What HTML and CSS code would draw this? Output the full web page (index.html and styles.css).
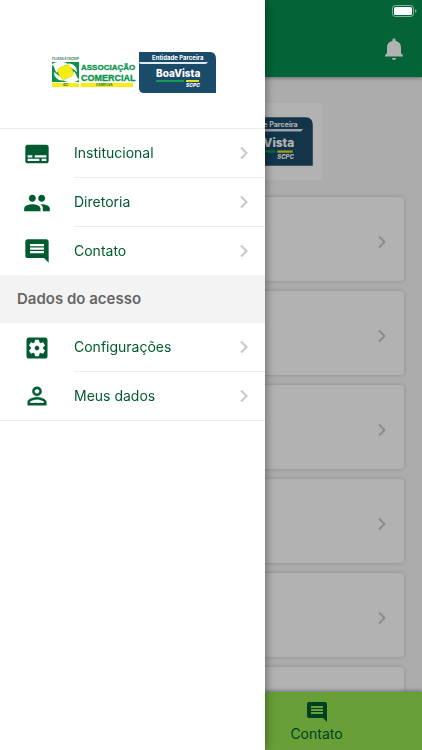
FILE: index.html
```html
<!DOCTYPE html>
<html lang="pt-BR">
<head>
<meta charset="utf-8">
<meta name="viewport" content="width=device-width, initial-scale=1">
<title>Associação Comercial</title>
<link rel="stylesheet" href="styles.css">
</head>
<body>
<svg class="sprite" aria-hidden="true">
  <symbol id="logo" viewBox="0 0 187 65">
    <rect width="187" height="65" fill="#fff"/>
    <text class="logo-tiny" x="15" y="20" fill="#3b7a52">FILIADA À FACESP</text>
    <rect x="15" y="22" width="27" height="20" fill="#079447"/>
    <path d="M15 24C20 21 27 21 31 24L22 28L20 33C17 30 18 26 15 25ZM42 40C37 43 30 43 26 40L35 36L37 31C40 34 39 38 42 39ZM29 24C35 22 40 26 40 32L36 29ZM28 40C22 42 17 38 17 32L21 35Z" fill="#fff"/>
    <ellipse cx="28.500" cy="32" rx="7.500" ry="6.500" fill="#f7ec13"/>
    <path d="M20 29L32 24L37 35L25 40Z" fill="#f7ec13"/>
    <rect x="15" y="43" width="27" height="4" fill="#f7ec13"/>
    <rect x="44" y="43" width="52" height="4" fill="#f7ec13"/>
    <text class="logo-tiny" x="26" y="46" fill="#17733b">ACI</text>
    <text class="logo-tiny" x="59" y="46" fill="#17733b">CABREÚVA</text>
    <text class="logo-name" x="44" y="30" fill="#079447">ASSOCIAÇÃO</text>
    <text class="logo-name logo-name-large" x="44" y="41" fill="#079447">COMERCIAL</text>
    <path d="M102 12H173Q179 12 179 19V53H107Q102 53 102 48Z" fill="#1a4c6a"/>
    <path d="M102 22H171L169 24H105Q102 24 102 22Z" fill="#dfe9f0"/>
    <text class="logo-partner" x="115" y="20" fill="#fff">Entidade Parceira</text>
    <text class="logo-brand" x="119" y="37" fill="#fff">BoaVista</text>
    <rect x="119" y="40" width="28" height="2" fill="#169b54"/>
    <rect x="149" y="40" width="13" height="2" fill="#e3df2c"/>
    <text class="logo-scpc" x="149" y="47" fill="#fff">SCPC</text>
  </symbol>
  <symbol id="chevron" viewBox="0 0 10 14"><path d="M2 1.500L7.500 7L2 12.500" fill="none" stroke="currentColor" stroke-width="2"/></symbol>
  <symbol id="comment" viewBox="0 0 24 24"><path d="M21.990 4c0-1.100-.89-2-1.990-2H4c-1.100 0-2 .9-2 2v12c0 1.100.9 2 2 2h14l4 4-.01-18zM18 14H6v-2h12v2zm0-3H6V9h12v2zm0-3H6V6h12v2z"/></symbol>
</svg>

<div class="app">
  <header class="toolbar">
    <button class="icon-button" type="button" aria-label="Notificações">
      <svg viewBox="0 0 18 22" width="18" height="22"><path d="M9 22a2 2 0 0 0 2-2H7a2 2 0 0 0 2 2ZM16 15V9.500C16 6 14 3.600 10.500 2.800V1.700a1.500 1.500 0 0 0-3 0V2.800C4 3.600 2 6 2 9.500V15L0 17.500V18.500H18V17.500Z"/></svg>
    </button>
  </header>
  <main class="content">
    <svg class="page-logo" role="img" aria-label="Associação Comercial"><use href="#logo"/></svg>
    <div class="cards">
      <a class="card" href="#"><svg class="chevron"><use href="#chevron"/></svg></a>
      <a class="card" href="#"><svg class="chevron"><use href="#chevron"/></svg></a>
      <a class="card" href="#"><svg class="chevron"><use href="#chevron"/></svg></a>
      <a class="card" href="#"><svg class="chevron"><use href="#chevron"/></svg></a>
      <a class="card" href="#"><svg class="chevron"><use href="#chevron"/></svg></a>
      <a class="card" href="#"><svg class="chevron"><use href="#chevron"/></svg></a>
    </div>
  </main>
  <nav class="tabs">
    <a class="tab" href="#"><svg class="tab-icon"><use href="#comment"/></svg>Contato</a>
  </nav>
</div>

<div class="backdrop"></div>

<svg class="battery" viewBox="0 0 25 12" width="25" height="12" aria-hidden="true">
  <rect x=".5" y=".5" width="21" height="11" rx="3" fill="none" stroke="#fff" stroke-opacity=".5"/>
  <rect x="2" y="2" width="18" height="8" rx="1.500" fill="#fff"/>
  <path d="M23 4.200Q24.500 4.800 24.500 6T23 7.800Z" fill="#fff" fill-opacity=".5"/>
</svg>

<aside class="drawer">
  <div class="drawer-head">
    <svg class="drawer-logo" role="img" aria-label="Associação Comercial"><use href="#logo"/></svg>
  </div>
  <nav class="menu">
    <a class="item" href="#">
      <svg class="item-icon" viewBox="0 0 24 24"><path d="M20 4H4c-1.100 0-2 .9-2 2v12c0 1.100.9 2 2 2h16c1.100 0 2-.9 2-2V6c0-1.100-.9-2-2-2zM4 13h4v2H4v-2zm10 5H4v-2h10v2zm6 0h-4v-2h4v2zm0-3H10v-2h10v2z"/></svg>
      <span class="item-body">Institucional<svg class="chevron"><use href="#chevron"/></svg></span>
    </a>
    <a class="item" href="#">
      <svg class="item-icon" viewBox="0 0 24 24"><path d="M16 11c1.660 0 2.990-1.340 2.990-3S17.660 5 16 5c-1.660 0-3 1.340-3 3s1.340 3 3 3zm-8 0c1.660 0 2.990-1.340 2.990-3S9.660 5 8 5C6.340 5 5 6.340 5 8s1.340 3 3 3zm0 2c-2.330 0-7 1.170-7 3.500V19h14v-2.500c0-2.330-4.670-3.500-7-3.500zm8 0c-.29 0-.62.020-.97.050 1.160.84 1.970 1.970 1.970 3.450V19h6v-2.500c0-2.330-4.670-3.500-7-3.500z"/></svg>
      <span class="item-body">Diretoria<svg class="chevron"><use href="#chevron"/></svg></span>
    </a>
    <a class="item" href="#">
      <svg class="item-icon"><use href="#comment"/></svg>
      <span class="item-body item-body-plain">Contato<svg class="chevron"><use href="#chevron"/></svg></span>
    </a>
    <h2 class="section">Dados do acesso</h2>
    <a class="item" href="#">
      <svg class="item-icon" viewBox="0 0 24 24"><path d="M12 10c-1.100 0-2 .9-2 2s.9 2 2 2 2-.9 2-2-.9-2-2-2zm7-7H5c-1.110 0-2 .9-2 2v14c0 1.100.89 2 2 2h14c1.110 0 2-.9 2-2V5c0-1.100-.89-2-2-2zm-1.750 9c0 .23-.02.460-.05.680l1.480 1.160c.13.110.17.300.08.450l-1.400 2.420c-.09.150-.27.210-.43.150l-1.740-.7c-.36.280-.76.510-1.180.69l-.26 1.850c-.03.170-.18.300-.35.300h-2.800c-.17 0-.32-.13-.35-.29l-.26-1.850c-.43-.18-.82-.41-1.180-.69l-1.740.7c-.16.060-.34 0-.43-.15l-1.400-2.420c-.09-.15-.05-.34.080-.45l1.480-1.160c-.03-.23-.05-.46-.05-.69 0-.23.020-.46.050-.68l-1.480-1.160c-.13-.11-.17-.30-.08-.45l1.400-2.420c.09-.15.270-.21.430-.15l1.740.7c.36-.28.760-.51 1.180-.69l.26-1.850c.03-.17.180-.30.350-.30h2.800c.17 0 .32.130.35.290l.26 1.850c.43.180.82.410 1.180.69l1.740-.7c.16-.06.340 0 .43.150l1.400 2.420c.09.150.05.340-.08.450l-1.480 1.160c.03.230.05.460.05.690z"/></svg>
      <span class="item-body">Configurações<svg class="chevron"><use href="#chevron"/></svg></span>
    </a>
    <a class="item item-last" href="#">
      <svg class="item-icon" viewBox="0 0 24 24"><path d="M12 5.900c1.160 0 2.100.94 2.100 2.100s-.94 2.100-2.100 2.100S9.900 9.160 9.900 8s.94-2.100 2.100-2.100m0 9c2.970 0 6.100 1.460 6.100 2.100v1.100H5.900V17c0-.64 3.130-2.100 6.100-2.100M12 4C9.790 4 8 5.790 8 8s1.790 4 4 4 4-1.790 4-4-1.790-4-4-4zm0 9c-2.670 0-8 1.340-8 4v3h16v-3c0-2.660-5.330-4-8-4z" stroke="currentColor" stroke-width=".3"/></svg>
      <span class="item-body item-body-plain">Meus dados<svg class="chevron"><use href="#chevron"/></svg></span>
    </a>
  </nav>
</aside>
</body>
</html>
```
FILE: styles.css
```css
* { box-sizing: border-box; }

body {
  margin: 0;
  font-family: Inter, "Liberation Sans", sans-serif;
  font-size: 14px;
  line-height: 20px;
  color: #005c30;
}

a { color: inherit; text-decoration: none; }
svg { display: block; fill: currentColor; }
.sprite { display: none; }

.logo-tiny { font: 700 3px Inter, sans-serif; }
.logo-name { font: 700 8px "Liberation Sans", sans-serif; stroke: #079447; stroke-width: 0.3px; }
.logo-name-large { font-size: 9px; }
.logo-partner { font: 700 6px Inter, sans-serif; }
.logo-brand { font: 800 10px Inter, sans-serif; }
.logo-scpc { font: italic 800 5px Inter, sans-serif; }

.app {
  display: flex;
  flex-direction: column;
  height: 100vh;
  overflow: hidden;
  background: #f7f7f7;
}

.toolbar {
  display: flex;
  flex: none;
  align-items: center;
  justify-content: flex-end;
  height: 77px;
  padding: 20px 19px 0;
  background: #069050;
  box-shadow: 0 1px 4px rgba(0, 0, 0, 0.4);
  z-index: 1;
}

.icon-button {
  padding: 0;
  border: 0;
  background: none;
  color: #fff;
}

.content {
  flex: 1;
  min-height: 0;
  padding: 26px 18px 0;
  overflow: hidden;
}

.page-logo { width: 223px; height: 77px; margin: 0 auto 17px; }

.cards { display: grid; gap: 10px; }

.card {
  display: flex;
  align-items: center;
  justify-content: flex-end;
  height: 84px;
  padding: 6px 17px 0;
  border-radius: 4px;
  background: #fff;
  box-shadow: 0 0 4px rgba(0, 0, 0, 0.2);
}

.chevron { flex: none; width: 10px; height: 14px; color: #c7c7cc; }

.tabs {
  display: grid;
  flex: none;
  grid-template-columns: 1fr 1fr;
  height: 58px;
  background: #95e450;
  box-shadow: 0 -1px 4px rgba(0, 0, 0, 0.4);
  z-index: 1;
}

.tab {
  display: flex;
  grid-column: 2;
  flex-direction: column;
  align-items: center;
  padding-top: 8px;
}

.tab-icon { width: 24px; height: 24px; }

.backdrop {
  position: fixed;
  inset: 0;
  z-index: 2;
  background: rgba(0, 0, 0, 0.3);
}

.battery { position: fixed; top: 5px; right: 5px; z-index: 3; }

.drawer {
  position: fixed;
  inset: 0 auto 0 0;
  z-index: 4;
  width: 265px;
  background: #fff;
  box-shadow: 0 0 10px rgba(0, 0, 0, 0.5);
}

.drawer-head { padding: 40px 4px 23px 0; }
.drawer-logo { width: 187px; height: 65px; margin: 0 auto; }
.menu { border-top: 1px solid #ececec; }

.item {
  display: flex;
  align-items: center;
  padding-left: 23px;
}

.item-icon { flex: none; width: 28px; height: 28px; margin-right: 23px; }

.item-body {
  display: flex;
  flex: 1;
  align-items: center;
  justify-content: space-between;
  height: 49px;
  padding-right: 16px;
  border-bottom: 1px solid #ececec;
}

.item-body-plain { height: 48px; border-bottom: 0; }
.item-last { border-bottom: 1px solid #ececec; }

.section {
  margin: 0;
  padding: 14px 17px;
  background: #f3f3f3;
  color: #666;
  font-size: 15px;
  font-weight: 600;
}
```
